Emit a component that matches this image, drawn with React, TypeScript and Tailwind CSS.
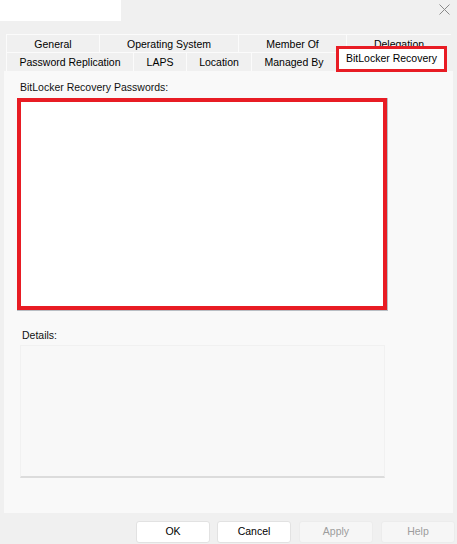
import React from "react";

const font = { fontFamily: '"Liberation Sans", Arial, sans-serif' };

function Tab({ w, label }: { w: number; label: string }) {
  return (
    <div
      className="flex h-full shrink-0 items-center justify-center border-l border-t border-[#fbfbfb] pt-[2px] text-[10.5px] text-[#000]"
      style={{ width: w }}
    >
      {label}
    </div>
  );
}

export default function App() {
  return (
    <div
      className="flex h-[544px] w-[457px] flex-col overflow-hidden bg-[#f0f0f0] text-black"
      style={font}
    >
      {/* title strip */}
      <div className="flex h-[21px] shrink-0 items-start justify-between">
        <div className="h-[21px] w-[121px] bg-white" />
        <svg
          width="11"
          height="11"
          viewBox="0 0 11 11"
          className="mr-[7px] mt-[4px]"
        >
          <path d="M0.5 0.5 L10.5 10.5 M10.5 0.5 L0.5 10.5" stroke="#8a8a8a" strokeWidth="1" />
        </svg>
      </div>

      {/* tabs */}
      <div className="ml-[6px] mt-[13px] flex w-[445px] flex-col">
        <div className="flex h-[18px]">
          <Tab w={93} label="General" />
          <Tab w={139} label="Operating System" />
          <Tab w={108} label="Member Of" />
          <Tab w={105} label="Delegation" />
        </div>
        <div className="flex h-[19px] items-end">
          <Tab w={127} label="Password Replication" />
          <Tab w={53} label="LAPS" />
          <Tab w={65} label="Location" />
          <Tab w={85} label="Managed By" />
          <div className="relative z-10 -mb-[1px] flex h-[26px] w-[111px] shrink-0 items-center justify-center border-[3px] border-[#e81c24] bg-white text-[10.5px] text-[#000]">
            BitLocker Recovery
          </div>
        </div>
      </div>

      {/* panel */}
      <div className="ml-[4px] flex h-[442px] w-[449px] flex-col bg-[#f9f9f9] pl-[13px]">
        <div className="ml-[3px] mt-[9px] text-[10.5px] leading-[14px] text-[#111]">
          BitLocker Recovery Passwords:
        </div>
        <div className="mt-[4px] w-[371px] pb-[1px] pr-[1px] bg-[#b9bec4]">
          <div className="h-[212px] w-[370px] border-[4px] border-[#e81c24] bg-white" />
        </div>
        <div className="ml-[5px] mt-[17px] text-[10.5px] leading-[14px] text-[#111]">
          Details:
        </div>
        <div className="ml-[3px] mt-[3px] h-[133px] w-[365px] border border-b-2 border-[#f1f1f1] border-b-[#dcdcdc] bg-[#f8f8f8]" />
      </div>

      {/* buttons */}
      <div className="mt-[8px] flex justify-end gap-[7px] pr-[2px]">
        <button className="flex h-[22px] w-[74px] items-center justify-center rounded-[3px] border border-[#e2e2e2] bg-white text-[10.5px] text-[#000]">
          OK
        </button>
        <button className="flex h-[22px] w-[74px] items-center justify-center rounded-[3px] border border-[#e2e2e2] bg-white text-[10.5px] text-[#000]">
          Cancel
        </button>
        <button className="ml-[1px] flex h-[22px] w-[74px] items-center justify-center rounded-[3px] border border-[#ececec] bg-[#f6f6f6] text-[10.5px] text-[#9d9d9d]">
          Apply
        </button>
        <button className="ml-[1px] flex h-[22px] w-[74px] items-center justify-center rounded-[3px] border border-[#ececec] bg-[#f6f6f6] text-[10.5px] text-[#9d9d9d]">
          Help
        </button>
      </div>
    </div>
  );
}
